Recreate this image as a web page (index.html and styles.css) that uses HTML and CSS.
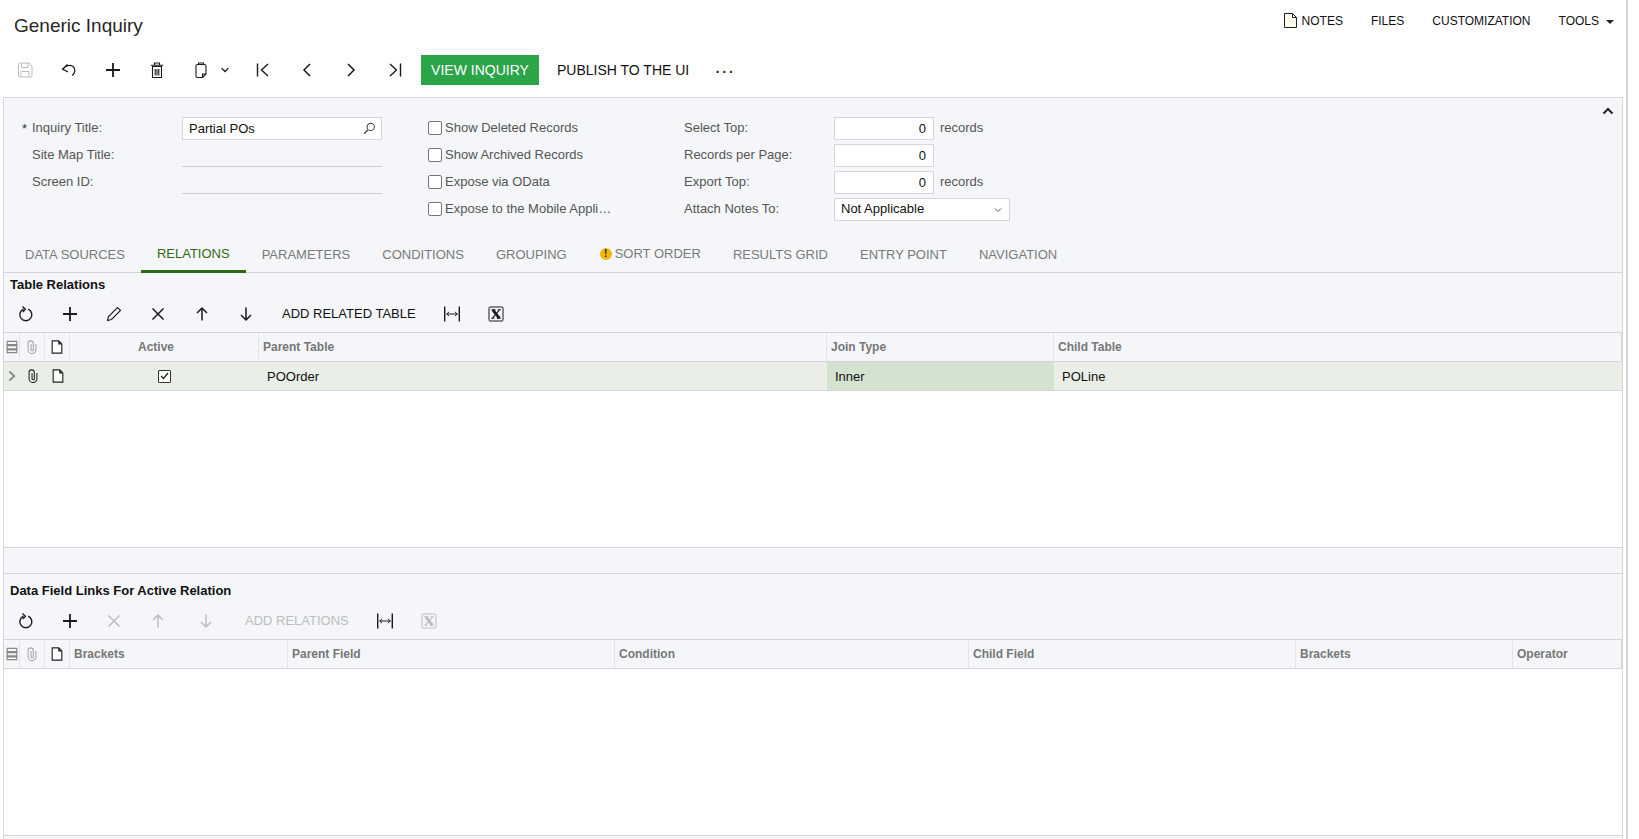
FILE: index.html
```html
<!DOCTYPE html>
<html lang="en">
<head>
  <meta charset="UTF-8" />
  <title>Generic Inquiry</title>
  <link rel="stylesheet" href="styles.css">
</head>
<body>
  <!-- Iconos -->
  <svg class="defs" width="0" height="0">
    <symbol id="i-save" viewBox="0 0 16 16"><path d="M2.500 1h9.500l3 3v10a1 1 0 0 1-1 1H2.500a1 1 0 0 1-1-1V2a1 1 0 0 1 1-1z M4.500 1v4.500h6.500V1 M4 15V9.500h8V15" fill="none" stroke="currentColor"/></symbol>
    <symbol id="i-undo" viewBox="0 0 16 16"><path d="M6.500 2.500 1.500 7l5.500 3 M1.800 7C5 3.500 9 2.500 12 4.500c3 2.500 2.200 6.500-.8 9" fill="none" stroke="currentColor" stroke-width="1.300"/></symbol>
    <symbol id="i-plus" viewBox="0 0 16 16"><path d="M8 1v14M1 8h14" fill="none" stroke="currentColor" stroke-width="1.800"/></symbol>
    <symbol id="i-trash" viewBox="0 0 16 16"><path d="M3.500 4.500h9v11h-9z M1.800 3.200h12.400 M5.500 3V1h5v2 M6.200 7v6.500 M8 7v6.500 M9.800 7v6.500" fill="none" stroke="currentColor" stroke-width="1.100"/></symbol>
    <symbol id="i-paste" viewBox="0 0 16 16"><path d="M4.500 2.500h7a1.500 1.500 0 0 1 1.500 1.500v8l-3.500 3.500H4.500A1.500 1.500 0 0 1 3 14V4a1.500 1.500 0 0 1 1.500-1.500z M5.500 2.500V1h5v1.500 M13 12H9.500v3.500" fill="none" stroke="currentColor" stroke-width="1.100"/></symbol>
    <symbol id="i-down" viewBox="0 0 16 16"><path d="M3.500 5.500 8 10l4.500-4.500" fill="none" stroke="currentColor" stroke-width="1.800"/></symbol>
    <symbol id="i-down-thin" viewBox="0 0 16 16"><path d="M4 6l4 4 4-4" fill="none" stroke="currentColor" stroke-width="1.200"/></symbol>
    <symbol id="i-first" viewBox="0 0 16 16"><path d="M2.500 1.500v13M13 2 6.500 8l6.500 6" fill="none" stroke="currentColor" stroke-width="1.400"/></symbol>
    <symbol id="i-prev" viewBox="0 0 16 16"><path d="M11 2 5 8l6 6" fill="none" stroke="currentColor" stroke-width="1.500"/></symbol>
    <symbol id="i-next" viewBox="0 0 16 16"><path d="M5 2l6 6-6 6" fill="none" stroke="currentColor" stroke-width="1.500"/></symbol>
    <symbol id="i-last" viewBox="0 0 16 16"><path d="M13.500 1.500v13M3 2l6.500 6L3 14" fill="none" stroke="currentColor" stroke-width="1.400"/></symbol>
    <symbol id="i-row" viewBox="0 0 16 16"><path d="M4.500 2 11 8l-6.500 6" fill="none" stroke="currentColor" stroke-width="2.400"/></symbol>
    <symbol id="i-refresh" viewBox="0 0 16 16"><path d="M10.200 3.200A6 6 0 1 1 5.500 3.200 M4.500.6 7.300 3.200 4.800 6" fill="none" stroke="currentColor" stroke-width="1.400"/></symbol>
    <symbol id="i-pencil" viewBox="0 0 16 16"><path d="M1.500 14.500l1-4L11.500 1.500l3 3-9 9z" fill="none" stroke="currentColor" stroke-width="1.100"/></symbol>
    <symbol id="i-close" viewBox="0 0 16 16"><path d="M2.500 2.500l11 11M13.500 2.500l-11 11" fill="none" stroke="currentColor" stroke-width="1.500"/></symbol>
    <symbol id="i-up" viewBox="0 0 16 16"><path d="M8 14.500V2M3 7l5-5 5 5" fill="none" stroke="currentColor" stroke-width="1.500"/></symbol>
    <symbol id="i-dn" viewBox="0 0 16 16"><path d="M8 1.500V14M3 9l5 5 5-5" fill="none" stroke="currentColor" stroke-width="1.500"/></symbol>
    <symbol id="i-fit" viewBox="0 0 16 16"><path d="M.7 .5v15M15.300 .5v15" fill="none" stroke="currentColor" stroke-width="1.400"/><path d="M2.500 8h11M5 5.800 2.800 8 5 10.200M11 5.800 13.200 8 11 10.200" fill="none" stroke="currentColor"/></symbol>
    <symbol id="i-excel" viewBox="0 0 16 16"><rect x="1" y="1" width="14" height="14" rx="1" fill="none" stroke="currentColor"/><path d="M4.800 3.800 11.300 12.200" fill="none" stroke="currentColor" stroke-width="2.800"/><path d="M11.500 3.800 4.500 12.200M3.500 3.800h4M9.800 3.800h3M3.300 12.200h3M8.800 12.200h4" fill="none" stroke="currentColor" stroke-width="1.100"/></symbol>
    <symbol id="i-clip" viewBox="0 0 16 16"><path d="M12.500 4.500v6.500a4.500 4.500 0 0 1-9 0V4a3 3 0 0 1 6 0v7a1.300 1.300 0 0 1-2.600 0V4.500" fill="none" stroke="currentColor" stroke-width="1.200"/></symbol>
    <symbol id="i-note" viewBox="0 0 16 16"><path d="M2.500 1h7.500l3.500 3.500V15h-11z M10 1v3.500h3.500" fill="#fff" stroke="currentColor" stroke-width="1.300"/></symbol>
    <symbol id="i-cols" viewBox="0 0 16 16"><path d="M2.500 1.500h11v13h-11z" fill="none" stroke="currentColor" stroke-width="1.300"/><path d="M2 4.500h12v2.500H2zM2 9.500h12v2.500H2z" fill="currentColor"/></symbol>
    <symbol id="i-search" viewBox="0 0 16 16"><circle cx="9.500" cy="6" r="4.500" fill="none" stroke="currentColor" stroke-width="1.300"/><path d="M6 9.500 1.500 14.500" fill="none" stroke="currentColor" stroke-width="1.600"/></symbol>
  </svg>

  <div class="page">
    <!-- Cabecera -->
    <div class="top-bar">
      <div class="page-title">Generic Inquiry</div>
      <div class="top-links">
        <a class="top-link"><svg class="note-icon" width="13" height="15" viewBox="0 0 13 15"><path d="M.5.5h8l4 4v10H.5z" fill="#fffdf0" stroke="#222"/><path d="M8.500.5v4h4" fill="none" stroke="#222"/></svg>NOTES</a>
        <a class="top-link">FILES</a>
        <a class="top-link">CUSTOMIZATION</a>
        <a class="top-link">TOOLS<span class="caret"></span></a>
      </div>
    </div>

    <div class="toolbar">
      <button class="tool muted"><svg class="ico"><use href="#i-save"/></svg></button>
      <button class="tool"><svg class="ico"><use href="#i-undo"/></svg></button>
      <button class="tool"><svg class="ico"><use href="#i-plus"/></svg></button>
      <button class="tool"><svg class="ico"><use href="#i-trash"/></svg></button>
      <button class="tool tool-menu"><svg class="ico"><use href="#i-paste"/></svg><svg class="ico-sm"><use href="#i-down"/></svg></button>
      <button class="tool"><svg class="ico"><use href="#i-first"/></svg></button>
      <button class="tool"><svg class="ico"><use href="#i-prev"/></svg></button>
      <button class="tool"><svg class="ico"><use href="#i-next"/></svg></button>
      <button class="tool"><svg class="ico"><use href="#i-last"/></svg></button>
      <button class="btn-primary">VIEW INQUIRY</button>
      <button class="btn-text">PUBLISH TO THE UI</button>
      <button class="btn-dots">···</button>
    </div>

    <div class="panel">
      <svg class="collapse" width="12" height="8" viewBox="0 0 12 8"><path d="M1.500 6.500 6 2l4.500 4.500" fill="none" stroke="#222" stroke-width="2"/></svg>

      <!-- Formulario -->
      <div class="form">
        <div class="form-col col-title">
          <label class="field-label required">Inquiry Title:</label>
          <div class="input input-search"><span>Partial POs</span><svg class="search-ico"><use href="#i-search"/></svg></div>
          <label class="field-label">Site Map Title:</label>
          <div class="input-line"></div>
          <label class="field-label">Screen ID:</label>
          <div class="input-line"></div>
        </div>
        <div class="form-col col-checks">
          <label class="check"><span class="box"></span>Show Deleted Records</label>
          <label class="check"><span class="box"></span>Show Archived Records</label>
          <label class="check"><span class="box"></span>Expose via OData</label>
          <label class="check"><span class="box"></span>Expose to the Mobile Appli…</label>
        </div>
        <div class="form-col col-nums">
          <label class="field-label">Select Top:</label>
          <div class="num-wrap"><div class="input input-num">0</div><span class="unit">records</span></div>
          <label class="field-label">Records per Page:</label>
          <div class="num-wrap"><div class="input input-num">0</div></div>
          <label class="field-label">Export Top:</label>
          <div class="num-wrap"><div class="input input-num">0</div><span class="unit">records</span></div>
          <label class="field-label">Attach Notes To:</label>
          <div class="input input-select"><span>Not Applicable</span><svg class="ico-sm select-arrow"><use href="#i-down-thin"/></svg></div>
        </div>
      </div>

      <!-- Pestañas -->
      <div class="tabs">
        <div class="tab">DATA SOURCES</div>
        <div class="tab active">RELATIONS</div>
        <div class="tab">PARAMETERS</div>
        <div class="tab">CONDITIONS</div>
        <div class="tab">GROUPING</div>
        <div class="tab raised"><span class="warn">!</span>SORT ORDER</div>
        <div class="tab">RESULTS GRID</div>
        <div class="tab">ENTRY POINT</div>
        <div class="tab">NAVIGATION</div>
      </div>

      <!-- Relaciones -->
      <div class="section-title">Table Relations</div>
      <div class="grid-tools">
        <button class="tool"><svg class="ico"><use href="#i-refresh"/></svg></button>
        <button class="tool"><svg class="ico"><use href="#i-plus"/></svg></button>
        <button class="tool"><svg class="ico"><use href="#i-pencil"/></svg></button>
        <button class="tool"><svg class="ico"><use href="#i-close"/></svg></button>
        <button class="tool"><svg class="ico"><use href="#i-up"/></svg></button>
        <button class="tool"><svg class="ico"><use href="#i-dn"/></svg></button>
        <button class="grid-text">ADD RELATED TABLE</button>
        <button class="tool"><svg class="ico"><use href="#i-fit"/></svg></button>
        <button class="tool"><svg class="ico"><use href="#i-excel"/></svg></button>
      </div>
      <div class="grid-row grid-head cols-rel">
        <div class="cell icon-cell"><svg class="ico-cell dim"><use href="#i-cols"/></svg></div>
        <div class="cell icon-cell"><svg class="ico-cell faint"><use href="#i-clip"/></svg></div>
        <div class="cell icon-cell"><svg class="ico-cell"><use href="#i-note"/></svg></div>
        <div class="cell head-active">Active</div>
        <div class="cell">Parent Table</div>
        <div class="cell">Join Type</div>
        <div class="cell last">Child Table</div>
      </div>
      <div class="grid-row grid-data cols-rel">
        <div class="cell icon-cell"><svg class="ico-sm dim"><use href="#i-row"/></svg></div>
        <div class="cell icon-cell"><svg class="ico-cell"><use href="#i-clip"/></svg></div>
        <div class="cell icon-cell"><svg class="ico-cell"><use href="#i-note"/></svg></div>
        <div class="cell check-cell"><span class="box-on"><svg width="9" height="8" viewBox="0 0 9 8"><path d="M1 4l2.500 2.500L8 1" fill="none" stroke="#222" stroke-width="1.300"/></svg></span></div>
        <div class="cell">POOrder</div>
        <div class="cell selected">Inner</div>
        <div class="cell">POLine</div>
      </div>
      <div class="grid-empty rel-empty"></div>
      <div class="splitter"></div>

      <!-- Campos enlazados -->
      <div class="section-title second">Data Field Links For Active Relation</div>
      <div class="grid-tools">
        <button class="tool"><svg class="ico"><use href="#i-refresh"/></svg></button>
        <button class="tool"><svg class="ico"><use href="#i-plus"/></svg></button>
        <button class="tool off"><svg class="ico"><use href="#i-close"/></svg></button>
        <button class="tool off"><svg class="ico"><use href="#i-up"/></svg></button>
        <button class="tool off tool-wide"><svg class="ico"><use href="#i-dn"/></svg></button>
        <button class="grid-text off">ADD RELATIONS</button>
        <button class="tool"><svg class="ico"><use href="#i-fit"/></svg></button>
        <button class="tool off"><svg class="ico"><use href="#i-excel"/></svg></button>
      </div>
      <div class="grid-row grid-head cols-links">
        <div class="cell icon-cell"><svg class="ico-cell dim"><use href="#i-cols"/></svg></div>
        <div class="cell icon-cell"><svg class="ico-cell faint"><use href="#i-clip"/></svg></div>
        <div class="cell icon-cell"><svg class="ico-cell"><use href="#i-note"/></svg></div>
        <div class="cell">Brackets</div>
        <div class="cell">Parent Field</div>
        <div class="cell">Condition</div>
        <div class="cell">Child Field</div>
        <div class="cell">Brackets</div>
        <div class="cell last">Operator</div>
      </div>
      <div class="grid-empty links-empty"></div>
      <div class="panel-foot"></div>
    </div>
  </div>
</body>
</html>
```

FILE: styles.css
```css
* { box-sizing: border-box; margin: 0; padding: 0; }
html, body { height: 839px; overflow: hidden; }
body {
  font-family: "Liberation Sans", Arial, sans-serif;
  background-color: #ffffff;
  color: #111;
}
.defs { position: absolute; }
button {
  font-family: inherit;
  background: none;
  border: none;
  color: inherit;
  cursor: pointer;
}
.page {
  width: 1628px;
  height: 839px;
  border-right: 2px solid #d4d6d9;
}

/* Cabecera */
.top-bar {
  height: 50px;
  display: flex;
  justify-content: space-between;
}
.page-title {
  font-size: 19px;
  line-height: 51px;
  padding-left: 14px;
  color: #262626;
}
.top-links {
  display: flex;
  padding-top: 13px;
  padding-right: 12px;
  gap: 28px;
  font-size: 12px;
  line-height: 15px;
}
.top-link { display: flex; align-items: flex-start; padding-top: 1px; }
.note-icon { margin-right: 5px; margin-top: -1px; }
.caret {
  width: 0;
  height: 0;
  margin: 6px 0 0 7px;
  border-left: 4px solid transparent;
  border-right: 4px solid transparent;
  border-top: 4px solid #222;
}

/* Barra principal */
.toolbar {
  display: flex;
  align-items: center;
  height: 30px;
  margin: 5px 0 12px;
  padding-left: 3px;
}
.tool {
  width: 44px;
  height: 30px;
  flex: none;
  display: flex;
  align-items: center;
  justify-content: center;
  color: #1a1a1a;
}
.tool.muted, .tool.off, .grid-text.off { color: #bdbdbd; }
.tool-menu { width: 62px; justify-content: flex-start; padding-left: 14px; gap: 10px; }
.tool-wide { width: 51px; }
.ico { width: 16px; height: 16px; display: block; }
.ico-sm { width: 12px; height: 12px; display: block; }
.btn-primary {
  height: 30px;
  width: 118px;
  margin-left: 4px;
  background-color: #2ba548;
  color: #fff;
  font-size: 14px;
}
.btn-text {
  font-size: 14px;
  height: 30px;
  padding: 0 18px;
  white-space: nowrap;
}
.btn-dots {
  font-size: 20px;
  height: 30px;
  line-height: 28px;
  padding-left: 7px;
  color: #222;
}

/* Panel */
.panel {
  position: relative;
  width: 1620px;
  margin-left: 3px;
  border: 1px solid #d4d6d9;
  border-bottom: none;
  background-color: #f4f6f9;
  height: 742px;
}
.collapse { position: absolute; top: 9px; right: 8px; }

.form { display: flex; padding-top: 19px; height: 123px; font-size: 13px; }
.form-col { display: grid; grid-auto-rows: 23px; row-gap: 4px; align-items: center; align-content: start; }
.col-title { grid-template-columns: 178px 200px; width: 424px; }
.col-checks { width: 256px; grid-template-columns: 1fr; }
.col-nums { grid-template-columns: 150px 176px; }
.field-label { color: #555; padding: 0 0 2px 28px; }
.field-label.required { position: relative; }
.field-label.required::before {
  content: "*";
  position: absolute;
  left: 18px;
  top: 1px;
  color: #333;
}
.col-nums .field-label { padding-left: 0; }

.input {
  height: 23px;
  background: #fff;
  border: 1px solid #d4d6d9;
  display: flex;
  align-items: center;
  font-size: 13px;
  color: #111;
}
.input-search { justify-content: space-between; padding: 0 5px 0 6px; }
.search-ico { width: 13px; height: 13px; color: #444; }
.input-line { height: 23px; border-bottom: 1px solid #cfd1d4; }
.input-num { width: 100px; justify-content: flex-end; padding-right: 7px; }
.num-wrap { display: flex; align-items: center; gap: 6px; }
.unit { color: #555; padding-bottom: 2px; }
.input-select { width: 176px; justify-content: space-between; padding: 0 5px 2px 6px; }
.select-arrow { color: #444; margin-top: 2px; }

.check { display: flex; align-items: center; color: #555; white-space: nowrap; padding-bottom: 2px; }
.box {
  width: 14px;
  height: 14px;
  margin-right: 3px;
  background: #fff;
  border: 1px solid #777;
  border-radius: 2px;
}

/* Pestañas */
.tabs {
  display: flex;
  height: 52px;
  padding: 15px 0 0 5px;
  border-bottom: 1px solid #d4d6d9;
}
.tab {
  height: 37px;
  padding: 11px 16px 0;
  font-size: 13px;
  line-height: 16px;
  color: #7a7a7a;
  white-space: nowrap;
  display: flex;
  align-items: flex-start;
}
.tab.active {
  color: #2f6a12;
  border-bottom: 3px solid #2f6a12;
  padding-top: 10px;
}
.tab.raised { padding-top: 10px; }
.warn {
  width: 12px;
  height: 12px;
  margin: 2px 3px 0 1px;
  border-radius: 50%;
  background: #f0b90b;
  color: #222;
  font-size: 10px;
  line-height: 12px;
  font-weight: bold;
  text-align: center;
}

/* Rejillas */
.section-title {
  font-size: 13px;
  font-weight: bold;
  line-height: 24px;
  padding-left: 6px;
  height: 23px;
}
.section-title.second { padding-top: 6px; height: 29px; line-height: 22px; }
.grid-tools {
  display: flex;
  align-items: center;
  height: 36px;
}
.grid-text {
  font-size: 13px;
  padding: 0 14px 2px;
  height: 30px;
  white-space: nowrap;
}
.grid-row {
  display: grid;
  border-top: 1px solid #d4d6d9;
  height: 29px;
}
.cols-rel { grid-template-columns: 16px 25px 25px 189px 568px 227px 1fr; }
.cols-links { grid-template-columns: 16px 25px 25px 218px 327px 354px 327px 217px 1fr; }
.cell {
  display: flex;
  align-items: center;
  padding-left: 4px;
  min-width: 0;
}
.grid-head .cell {
  border-right: 1px solid #e3e5e8;
  font-size: 12px;
  font-weight: bold;
  color: #777;
}
.grid-head .cell.last { border-right: 1px solid #d4d6d9; }
.cell.icon-cell { justify-content: center; padding-left: 0; color: #222; }
.head-active { justify-content: flex-start; padding-left: 68px !important; }
.ico-cell { width: 14px; height: 14px; display: block; }
.ico-cell.dim, .ico-sm.dim { color: #888; }
.ico-cell.faint { color: #a5a5a5; }
.grid-data {
  background-color: #e9eee6;
  font-size: 13px;
  color: #111;
}
.grid-data .cell { padding-left: 8px; }
.grid-data .cell.icon-cell { padding-left: 0; }
.cell.selected { background-color: #d4e3d0; }
.cell.check-cell { justify-content: center; padding-left: 0; }
.box-on {
  width: 13px;
  height: 13px;
  background: #fff;
  border: 1px solid #333;
  border-radius: 1px;
  display: flex;
  align-items: center;
  justify-content: center;
}
.grid-empty {
  background: #fff;
  border-top: 1px solid #d4d6d9;
}
.rel-empty { height: 157px; }
.links-empty { height: 167px; }
.splitter {
  height: 27px;
  border-top: 1px solid #d4d6d9;
  border-bottom: 1px solid #d4d6d9;
}
.panel-foot { height: 4px; border-top: 1px solid #d4d6d9; }
```
